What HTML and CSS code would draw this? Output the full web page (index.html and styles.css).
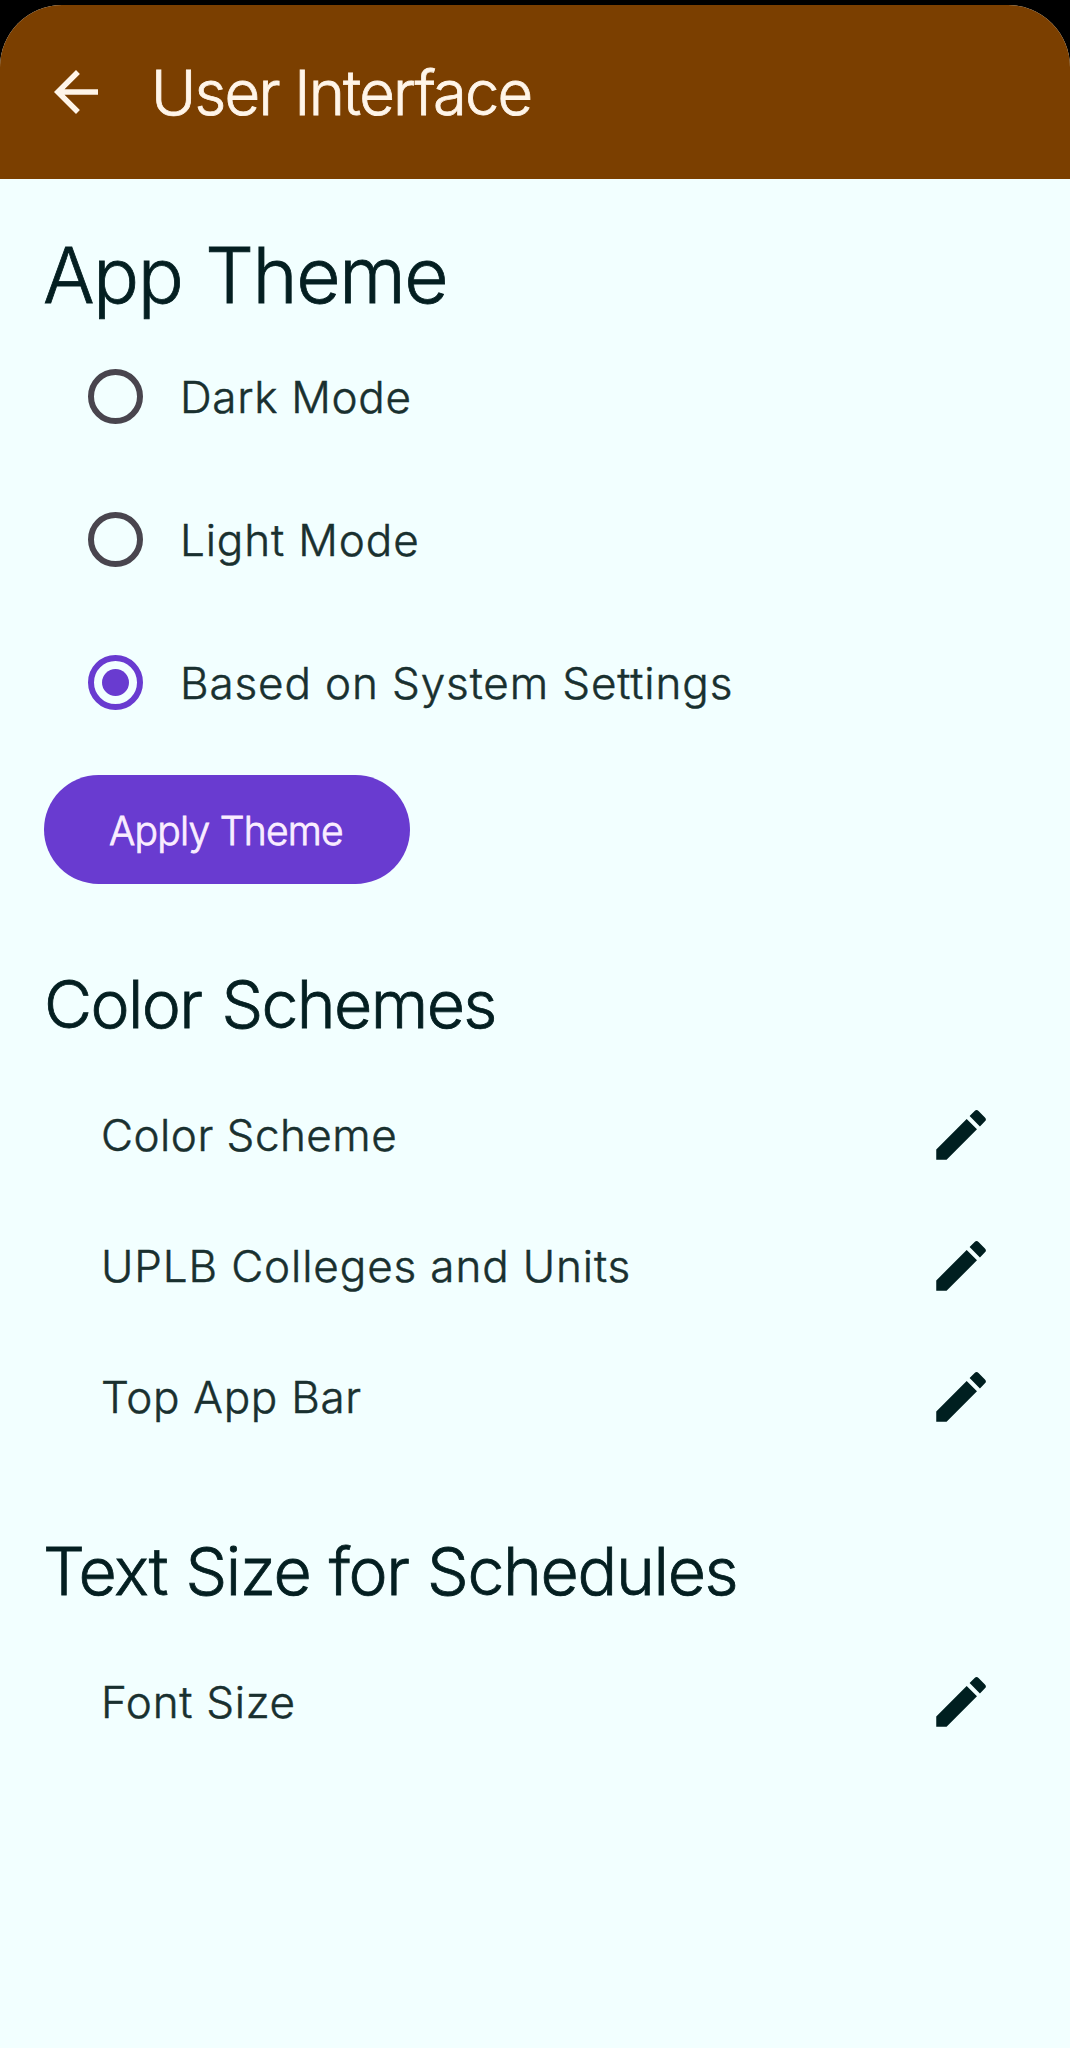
FILE: index.html
```html
<!DOCTYPE html>
<html lang="en">
<head>
<meta charset="utf-8">
<title>User Interface</title>
<link rel="stylesheet" href="styles.css">
</head>
<body>
<svg class="symbols" width="0" height="0" aria-hidden="true">
  <symbol id="edit" viewBox="0 0 24 24"><path d="M3 17.25V21h3.75L17.81 9.94l-3.75-3.75L3 17.25zM20.71 7.04a1 1 0 0 0 0-1.41l-2.34-2.34a1 1 0 0 0-1.41 0l-1.83 1.83 3.75 3.75 1.83-1.83z"/></symbol>
</svg>
<div class="screen">
  <header class="app-bar">
    <svg class="back" viewBox="0 0 24 24"><path d="M20 11H7.83l5.59-5.59L12 4l-8 8 8 8 1.41-1.41L7.83 13H20v-2z"/></svg>
    <span class="title">User Interface</span>
  </header>
  <main>
    <h1>App Theme</h1>
    <div class="options">
      <label class="option"><span class="radio"></span><span class="text">Dark Mode</span></label>
      <label class="option"><span class="radio"></span><span class="text wide">Light Mode</span></label>
      <label class="option"><span class="radio checked"></span><span class="text wide">Based on System Settings</span></label>
    </div>
    <button class="apply" type="button">Apply Theme</button>
    <h2>Color Schemes</h2>
    <ul>
      <li><span class="text tight">Color Scheme</span><svg class="edit"><use href="#edit"/></svg></li>
      <li><span class="text wide">UPLB Colleges and Units</span><svg class="edit"><use href="#edit"/></svg></li>
      <li><span class="text">Top App Bar</span><svg class="edit"><use href="#edit"/></svg></li>
    </ul>
    <h2 class="sizes">Text Size for Schedules</h2>
    <ul>
      <li><span class="text">Font Size</span><svg class="edit"><use href="#edit"/></svg></li>
    </ul>
  </main>
</div>
</body>
</html>
```
FILE: styles.css
```css
* { box-sizing: border-box; }
body {
  margin: 0;
  background: #000;
  color: #041f21;
  font-family: Inter, "Noto Sans", sans-serif;
  font-weight: 300;
}
.symbols { display: block; }
.screen {
  min-height: 2043px;
  margin-top: 5px;
  background: #f2ffff;
  border-radius: 62px 62px 0 0;
  overflow: hidden;
}
.app-bar {
  display: flex;
  align-items: center;
  height: 174px;
  padding-left: 43px;
  background: #7b3f00;
  color: #fff5e9;
}
.back { width: 66px; height: 66px; fill: currentColor; }
.title {
  margin-left: 42px;
  padding-top: 2px;
  font-size: 61.5px;
  line-height: 76px;
  letter-spacing: -1.75px;
  -webkit-text-stroke: 0.8px currentColor;
}
main { padding: 46px 76px 0 43px; }
h1, h2 { margin: 0; font-weight: 300; -webkit-text-stroke: 0.8px currentColor; }
h1 { font-size: 76.6px; line-height: 100px; letter-spacing: -1.5px; word-spacing: 3px; }
h2 {
  margin: 80px 0 25px;
  padding-left: 1px;
  font-size: 66px;
  line-height: 80px;
  letter-spacing: -1.6px;
  word-spacing: 3px;
}
h2.sizes { margin-top: 69px; padding-left: 0; letter-spacing: -1.3px; word-spacing: 1px; }
.option {
  display: flex;
  align-items: center;
  gap: 37px;
  height: 143px;
  padding-left: 45px;
}
.radio {
  display: grid;
  place-items: center;
  width: 55px;
  height: 55px;
  border: 6px solid #49454e;
  border-radius: 50%;
}
.radio.checked { border-color: #693bd0; }
.radio.checked::after {
  content: "";
  width: 27px;
  height: 27px;
  border-radius: 50%;
  background: #693bd0;
}
.text {
  color: #19302f;
  font-size: 44px;
  letter-spacing: 0.71px;
  -webkit-text-stroke: 0.5px currentColor;
}
.text.wide { letter-spacing: 0.88px; }
.text.tight { letter-spacing: 0.49px; }
.apply {
  display: block;
  width: 366px;
  height: 109px;
  margin: 21px 0 0 1px;
  padding: 2px 2px 0 0;
  border: 0;
  border-radius: 55px;
  background: #693bd0;
  color: #faedff;
  font: 300 39px Inter, "Noto Sans", sans-serif;
  letter-spacing: -0.75px;
  -webkit-text-stroke: 0.8px currentColor;
}
ul { margin: 0; padding: 0 0 0 58px; list-style: none; }
li { display: flex; align-items: center; justify-content: space-between; height: 131px; }
.edit { width: 66px; height: 66px; fill: #001f20; }
```
